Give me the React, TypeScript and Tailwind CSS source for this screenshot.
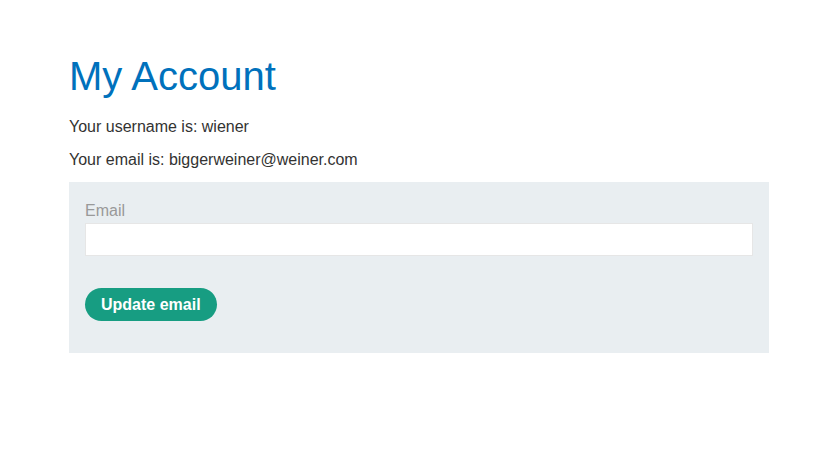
export default function App() {
  return (
    <div className="min-h-screen bg-white" style={{ fontFamily: '"Liberation Sans", Arial, sans-serif' }}>
      <div className="ml-[69px] w-[700px] pt-[53px]">
        <h1 className="text-[40px] leading-[46px] text-[#0071bc]">My Account</h1>
        <p className="mt-[16px] text-[16px] leading-6 text-[#333332]">Your username is: wiener</p>
        <p className="mt-[9px] text-[16px] leading-6 text-[#333332]">Your email is: biggerweiner@weiner.com</p>
        <form className="mt-[10px] flex flex-col bg-[#e9eef1] px-4 pt-[17px] pb-[32px]" onSubmit={(e) => e.preventDefault()}>
          <label className="text-[16px] leading-6 text-[#999999]">Email</label>
          <input type="email" className="h-[33px] w-full border border-[#e6e6e6] bg-white px-2 outline-none" />
          <div className="mt-[32px]">
            <button type="submit" className="h-[33px] rounded-full bg-[#179d82] px-4 text-[16px] font-bold text-white">
              Update email
            </button>
          </div>
        </form>
      </div>
    </div>
  );
}
